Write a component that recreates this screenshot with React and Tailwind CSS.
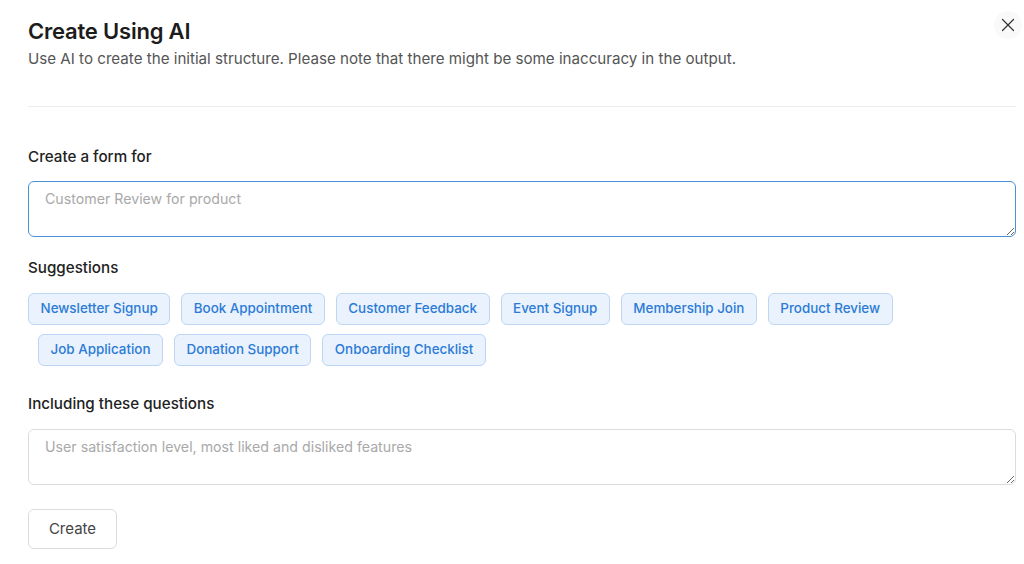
import { X } from 'lucide-react';

const rowOne = ['Newsletter Signup', 'Book Appointment', 'Customer Feedback', 'Event Signup', 'Membership Join', 'Product Review'];
const rowTwo = ['Job Application', 'Donation Support', 'Onboarding Checklist'];

function Chip({ label }) {
    return (
        <button className="h-[32px] px-[11.5px] rounded-md border border-[#bcd6f3] bg-[#e9f2fd] text-[13.4px] font-medium text-[#2c7bd6] leading-none whitespace-nowrap">
            {label}
        </button>
    );
}

export default function App() {
    return (
        <div className="min-h-screen bg-white font-['Inter','Liberation_Sans',sans-serif] text-[#1f1f1f]">
            <div className="relative pl-[28px] pr-[8px] pt-[16px]">
                {/* Header */}
                <button className="absolute right-[2px] top-[11px] w-[28px] h-[28px] flex items-center justify-center rounded-full bg-[#f9f9f9] text-[#333]">
                    <X size={22} strokeWidth={1.3} />
                </button>
                <h1 className="text-[22px] font-semibold leading-[30px] tracking-[-0.2px] text-[#1c1c1c]">Create Using AI</h1>
                <p className="mt-[1px] text-[15.15px] leading-[24px] text-[#555]">
                    Use AI to create the initial structure. Please note that there might be some inaccuracy in the output.
                </p>
                <div className="mt-[35px] h-px bg-[#ececec]" />

                {/* Form */}
                <label className="block mt-[39px] text-[15.2px] font-medium leading-[22px] text-[#222]">Create a form for</label>
                <textarea
                    className="mt-[13px] block w-full h-[56px] rounded-md border border-[#4a90d9] px-[16px] pt-[7px] pb-[8px] text-[14.2px] leading-[20px] placeholder:text-[#a9a9a9] outline-none"
                    placeholder="Customer Review for product"
                />

                <div className="mt-[20px] text-[15.2px] font-medium leading-[22px] text-[#222]">Suggestions</div>
                <div className="mt-[14px] flex gap-[11px]">
                    {rowOne.map((s) => <Chip key={s} label={s} />)}
                </div>
                <div className="mt-[9px] pl-[10px] flex gap-[11px]">
                    {rowTwo.map((s) => <Chip key={s} label={s} />)}
                </div>

                <label className="block mt-[27px] text-[15.2px] font-medium leading-[22px] text-[#222]">Including these questions</label>
                <textarea
                    className="mt-[14px] block w-full h-[56px] rounded-md border border-[#dcdcdc] px-[16px] pt-[7px] pb-[8px] text-[14.2px] leading-[20px] placeholder:text-[#a9a9a9] outline-none"
                    placeholder="User satisfaction level, most liked and disliked features"
                />

                <button className="mt-[24px] h-[40px] w-[89px] rounded-md border border-[#dcdcdc] bg-white text-[15px] text-[#444]">
                    Create
                </button>
            </div>
        </div>
    );
}
